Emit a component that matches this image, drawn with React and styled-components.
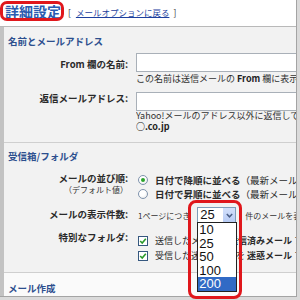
import React from 'react';
import styled, { createGlobalStyle } from 'styled-components';

const GlobalStyle = createGlobalStyle`
  html, body { margin: 0; padding: 0; }
  body {
    width: 300px;
    height: 300px;
    overflow: hidden;
    background: #dadada;
    font-family: "Noto Sans CJK JP", "Noto Sans", sans-serif;
    color: #222;
  }
`;

const Frame = styled.div`
  width: 296px;
  height: 296px;
  border-right: 1px solid #a4a4a4;
  border-bottom: 1px solid #a4a4a4;
  background: #f2f2f2;
  display: flex;
  flex-direction: column;
  position: relative;
`;

const TitleBar = styled.div`
  height: 26px;
  background: #ffffff;
  border-bottom: 1px solid #b9b9b9;
  display: flex;
  align-items: flex-start;
  padding-left: 5px;
`;

const Title = styled.h1`
  position: relative;
  margin: 0;
  padding-top: 1px;
  font-size: 14px;
  line-height: 20px;
  font-weight: 700;
  color: #2a5bb0;
  white-space: nowrap;
  &::after {
    content: "";
    position: absolute;
    left: -5px;
    top: 1px;
    width: 64px;
    height: 20px;
    box-sizing: border-box;
    border: 3px solid #e0171c;
    border-radius: 7px;
  }
`;

const BackLink = styled.div`
  margin: 6px 0 0 7px;
  font-size: 8.5px;
  line-height: 12px;
  color: #333;
  white-space: nowrap;
  a {
    color: #1d3f9e;
    text-decoration: underline;
    margin: 0 4px 0 5px;
  }
`;

const Content = styled.div`
  flex: 1;
  display: flex;
  flex-direction: column;
  border-left: 4px solid #c3c3c3;
  min-width: 0;
`;

const Section = styled.section`
  padding-bottom: ${p => p.$pb}px;
  border-bottom: ${p => (p.$last ? 'none' : '1px solid #cfcfcf')};
  background: ${p => (p.$light ? '#fafafa' : '#f2f2f2')};
  flex: ${p => (p.$last ? 1 : 'none')};
`;

const SectionHeader = styled.h2`
  margin: 0;
  padding: ${p => p.$pt}px 0 0 4px;
  font-size: 9.5px;
  line-height: 14px;
  font-weight: 700;
  color: #2d4f8e;
`;

const Row = styled.div`
  display: grid;
  grid-template-columns: 124px 1fr;
  column-gap: 8px;
  margin-top: ${p => p.$mt}px;
`;

const Label = styled.div`
  text-align: right;
  font-size: 9.5px;
  line-height: 12px;
  font-weight: 700;
  color: #2a2a2a;
  white-space: nowrap;
  padding-top: ${p => p.$pt || 0}px;
  margin-top: ${p => p.$mt || 0}px;
`;

const SubLabel = styled.div`
  font-size: 8px;
  font-weight: 400;
  color: #333;
`;

const Field = styled.div`
  min-width: 0;
  display: flex;
  flex-direction: column;
  padding-top: ${p => p.$pt || 0}px;
`;

const TextInput = styled.input`
  display: block;
  box-sizing: border-box;
  width: 100%;
  height: 19px;
  margin: 0;
  border: 1px solid #a9b0b8;
  border-right: none;
  background: #fff;
  padding: 0 2px;
`;

const Helper = styled.div`
  margin-top: ${p => p.$mt || 0}px;
  font-size: 9px;
  line-height: ${p => p.$lh || 12}px;
  color: #333;
  white-space: nowrap;
  overflow: hidden;
  b { font-weight: 700; color: #222; }
`;

const OptionLine = styled.label`
  display: flex;
  align-items: center;
  gap: 7px;
  padding-left: 2px;
  height: ${p => p.$h}px;
  font-size: ${p => p.$fs}px;
  white-space: nowrap;
  overflow: hidden;
  color: #2a2a2a;
  b { font-weight: 700; }
`;

const Radio = styled.span`
  flex: none;
  position: relative;
  width: 10px;
  height: 10px;
  box-sizing: border-box;
  border-radius: 50%;
  border: 1px solid #7f93ad;
  background: radial-gradient(circle at 40% 35%, #ffffff 40%, #e2e2e2 100%);
  &::after {
    content: "";
    display: ${p => (p.$checked ? 'block' : 'none')};
    position: absolute;
    left: 2px;
    top: 2px;
    width: 4px;
    height: 4px;
    border-radius: 50%;
    background: #2ba32b;
  }
`;

const Checkbox = styled.span`
  flex: none;
  width: 10px;
  height: 10px;
  box-sizing: border-box;
  border: 1px solid #36587f;
  background: #fff;
  display: flex;
  align-items: center;
  justify-content: center;
`;

const CountLine = styled.div`
  display: flex;
  align-items: center;
  padding-left: 2px;
  height: 16px;
  font-size: 8px;
  color: #333;
  white-space: nowrap;
  min-width: 0;
`;

const Trailing = styled.span`
  flex: 1;
  min-width: 0;
  overflow: hidden;
  margin-left: 9px;
`;

const SelectBox = styled.div`
  flex: none;
  position: relative;
  margin-left: 7px;
  width: 39px;
  height: 16px;
  box-sizing: border-box;
  border: 1px solid #7f9db9;
  background: #fff;
  display: flex;
  align-items: stretch;
  font-family: "Liberation Sans", Arial, sans-serif;
  font-size: 13px;
  color: #111;
  &::after {
    content: "";
    position: absolute;
    left: -10px;
    top: -8px;
    width: 54px;
    height: 99px;
    box-sizing: border-box;
    border: 3px solid #e0171c;
    border-radius: 8px;
    z-index: 3;
    pointer-events: none;
  }
`;

const SelectValue = styled.span`
  flex: 1;
  padding-left: 2px;
  line-height: 14px;
`;

const ArrowButton = styled.span`
  width: 12px;
  background: linear-gradient(#d3e0fb, #b7cbf5);
  display: flex;
  align-items: center;
  justify-content: center;
`;

const DropList = styled.ul`
  position: absolute;
  left: -1px;
  top: 14px;
  width: 40px;
  margin: 0;
  padding: 0;
  list-style: none;
  box-sizing: border-box;
  border: 1px solid #222;
  background: #fff;
  z-index: 2;
`;

const DropItem = styled.li`
  height: 13.6px;
  line-height: 13.6px;
  padding-left: 1px;
  font-size: 13px;
  background: ${p => (p.$active ? '#316ac5' : '#fff')};
  color: ${p => (p.$active ? '#fff' : '#111')};
`;

const Check = () => (
  <svg width="8" height="8" viewBox="0 0 8 8">
    <path d="M1.2 4 L3.2 6 L6.8 1.8" fill="none" stroke="#2a9a2a" strokeWidth="1.6" />
  </svg>
);

const Chevron = () => (
  <svg width="7" height="5" viewBox="0 0 7 5">
    <path d="M0.8 1 L3.5 3.8 L6.2 1" fill="none" stroke="#4a5e86" strokeWidth="1.5" />
  </svg>
);

export default function App() {
  const counts = ['10', '25', '50', '100', '200'];
  return (
    <>
      <GlobalStyle />
      <Frame>
        <TitleBar>
          <Title>詳細設定</Title>
          <BackLink>
            [<a href="#">メールオプションに戻る</a>]
          </BackLink>
        </TitleBar>
        <Content>
          <Section $pb={10}>
            <SectionHeader $pt={7}>名前とメールアドレス</SectionHeader>
            <Row $mt={5}>
              <Label $pt={5}>From 欄の名前:</Label>
              <Field>
                <TextInput readOnly />
                <Helper $mt={1}>この名前は送信メールの <b>From</b> 欄に表示されます</Helper>
              </Field>
            </Row>
            <Row $mt={7}>
              <Label $pt={0}>返信メールアドレス:</Label>
              <Field>
                <TextInput readOnly />
                <Helper $mt={-1} $lh={11}>Yahoo!メールのアドレス以外に返信してもらいたい場合（例：xxx@xxxx</Helper>
                <Helper $lh={11}><b>○.co.jp</b></Helper>
              </Field>
            </Row>
          </Section>

          <Section $pb={9}>
            <SectionHeader $pt={6}>受信箱/フォルダ</SectionHeader>
            <Row $mt={9}>
              <Label>
                メールの並び順:
                <SubLabel>（デフォルト値）</SubLabel>
              </Label>
              <Field $pt={1}>
                <OptionLine $h={14} $fs={9.5}>
                  <Radio $checked />
                  <span><b>日付で降順に並べる</b>（最新メールが先頭）</span>
                </OptionLine>
                <OptionLine $h={14} $fs={9.5}>
                  <Radio />
                  <span><b>日付で昇順に並べる</b>（最新メールが最後）</span>
                </OptionLine>
              </Field>
            </Row>
            <Row $mt={6}>
              <Label $pt={1}>メールの表示件数:</Label>
              <Field>
                <CountLine>
                  <span>1ページにつき</span>
                  <SelectBox>
                    <SelectValue>25</SelectValue>
                    <ArrowButton><Chevron /></ArrowButton>
                    <DropList>
                      {counts.map(c => (
                        <DropItem key={c} $active={c === '200'}>{c}</DropItem>
                      ))}
                    </DropList>
                  </SelectBox>
                  <Trailing>件のメールを表示する</Trailing>
                </CountLine>
              </Field>
            </Row>
            <Row $mt={10}>
              <Label $mt={-2}>特別なフォルダ:</Label>
              <Field>
                <OptionLine $h={15} $fs={9}>
                  <Checkbox><Check /></Checkbox>
                  <span>送信したメールを <b>送信済みメール</b> フォルダに保存</span>
                </OptionLine>
                <OptionLine $h={15} $fs={9}>
                  <Checkbox><Check /></Checkbox>
                  <span>受信した迷惑メールを&nbsp;<b>迷惑メール</b> フォルダへ</span>
                </OptionLine>
              </Field>
            </Row>
          </Section>

          <Section $pb={1} $light $last>
            <SectionHeader $pt={8}>メール作成</SectionHeader>
          </Section>
        </Content>
      </Frame>
    </>
  );
}
